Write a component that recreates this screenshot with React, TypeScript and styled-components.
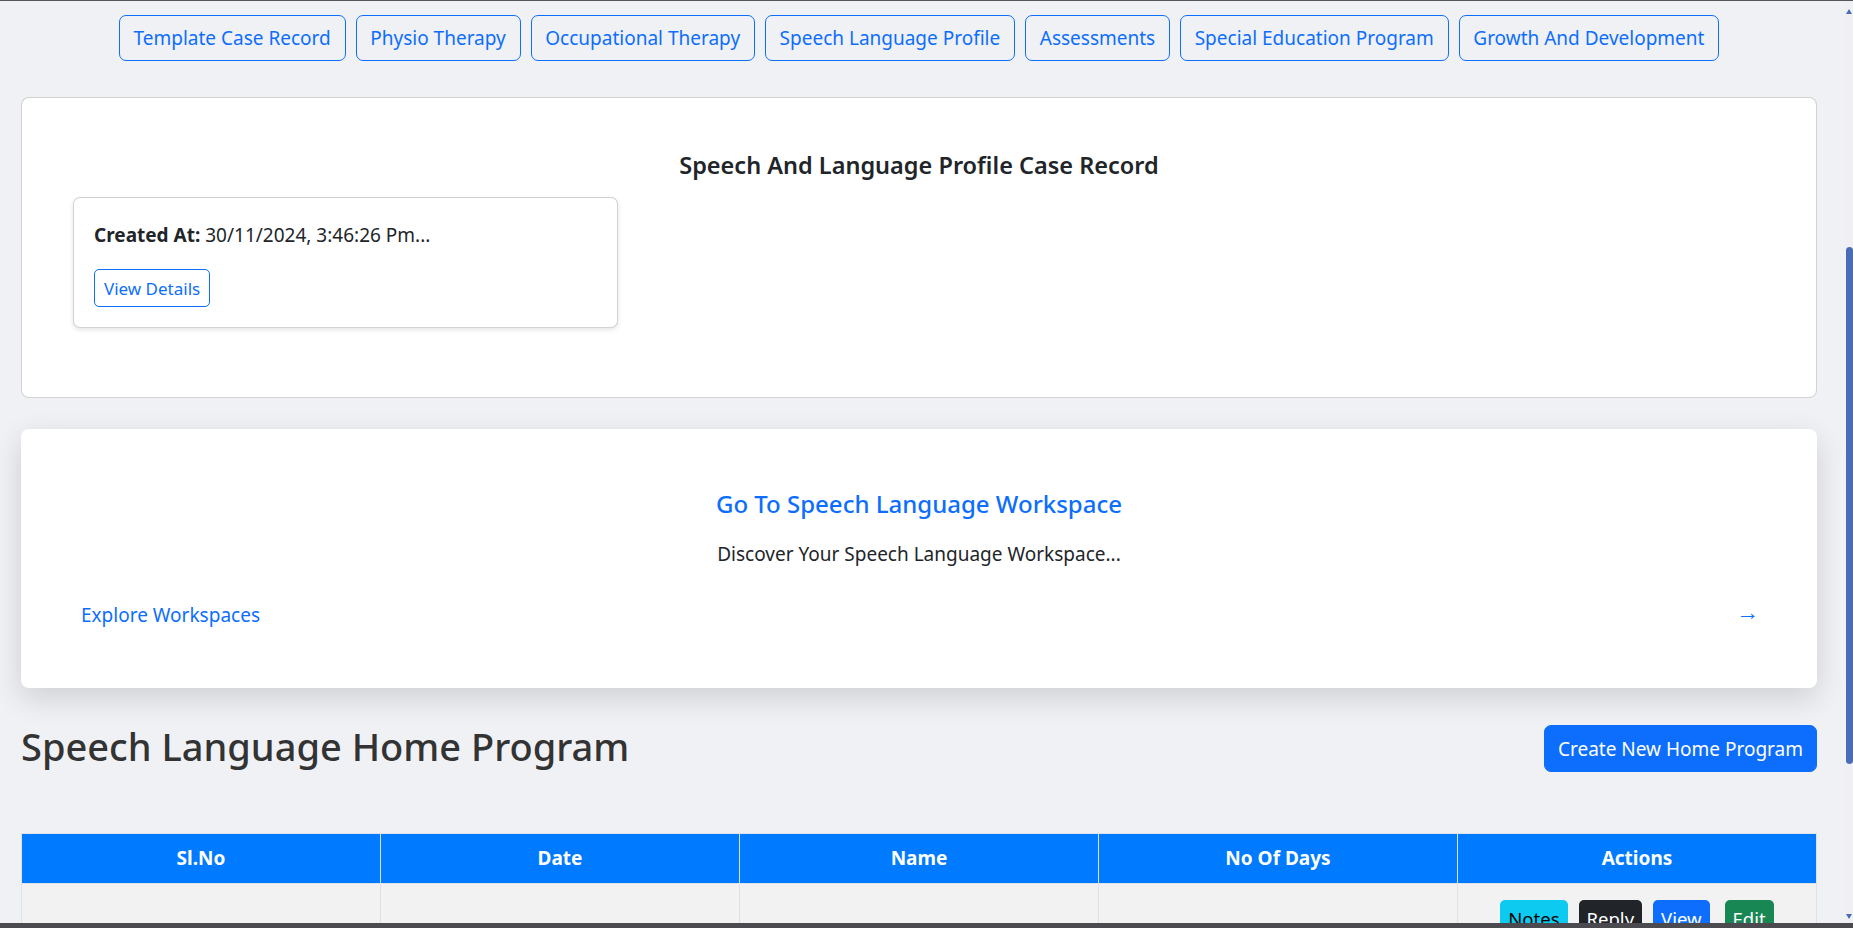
import styled, { createGlobalStyle } from "styled-components";

const GlobalStyle = createGlobalStyle`
  * {
    box-sizing: border-box;
  }
  html,
  body {
    margin: 0;
    height: 100%;
    overflow: hidden;
  }
  body {
    font-family: "Noto Sans", "Open Sans", sans-serif;
    font-size: 19px;
    color: #212529;
    background: #4a4a4f;
  }
`;

const tabs = [
  "Template Case Record",
  "Physio Therapy",
  "Occupational Therapy",
  "Speech Language Profile",
  "Assessments",
  "Special Education Program",
  "Growth And Development",
];

const columns = ["Sl.No", "Date", "Name", "No Of Days", "Actions"];

const actions = [
  { label: "Notes", variant: "info" },
  { label: "Reply", variant: "dark" },
  { label: "View", variant: "primary" },
  { label: "Edit", variant: "success" },
] as const;

type Variant = (typeof actions)[number]["variant"];

const variantColors: Record<Variant, { bg: string; fg: string }> = {
  info: { bg: "#0dcaf0", fg: "#000" },
  dark: { bg: "#212529", fg: "#fff" },
  primary: { bg: "#0d6efd", fg: "#fff" },
  success: { bg: "#198754", fg: "#fff" },
};

export default function App() {
  return (
    <>
      <GlobalStyle />
      <Frame>
        <Viewport>
          <Main>
            <TabBar>
              {tabs.map((t) => (
                <TabButton key={t}>{t}</TabButton>
              ))}
            </TabBar>

            <RecordCard>
              <CardTitle>Speech And Language Profile Case Record</CardTitle>
              <RecordItem>
                <RecordText>
                  <strong>Created At:</strong> 30/11/2024, 3:46:26 Pm...
                </RecordText>
                <OutlineSmall>View Details</OutlineSmall>
              </RecordItem>
            </RecordCard>

            <WorkspaceCard>
              <WorkspaceTitle>Go To Speech Language Workspace</WorkspaceTitle>
              <WorkspaceText>Discover Your Speech Language Workspace...</WorkspaceText>
              <WorkspaceFooter>
                <ExploreLink>Explore Workspaces</ExploreLink>
                <Arrow>→</Arrow>
              </WorkspaceFooter>
            </WorkspaceCard>

            <SectionHeader>
              <SectionTitle>Speech Language Home Program</SectionTitle>
              <PrimaryButton>Create New Home Program</PrimaryButton>
            </SectionHeader>

            <Table>
              <thead>
                <tr>
                  {columns.map((c) => (
                    <Th key={c}>{c}</Th>
                  ))}
                </tr>
              </thead>
              <tbody>
                <tr>
                  <Td />
                  <Td />
                  <Td />
                  <Td />
                  <Td>
                    <ActionGroup>
                      {actions.map((a) => (
                        <ActionButton key={a.label} $variant={a.variant}>
                          {a.label}
                        </ActionButton>
                      ))}
                    </ActionGroup>
                  </Td>
                </tr>
              </tbody>
            </Table>
          </Main>
          <ScrollTrack>
            <ScrollArrow $dir="up" />
            <ScrollThumb />
            <ScrollArrow $dir="down" />
          </ScrollTrack>
        </Viewport>
        <BottomBar />
      </Frame>
    </>
  );
}

const Frame = styled.div`
  display: flex;
  flex-direction: column;
  height: 928px;
  border-top: 1px solid #55565b;
`;

const Viewport = styled.div`
  display: flex;
  flex: 1;
  min-height: 0;
  background: #f0f1f5;
`;

const Main = styled.main`
  flex: 1;
  min-width: 0;
  overflow: hidden;
  padding: 0 28px 0 21px;
`;

const TabBar = styled.nav`
  display: flex;
  justify-content: center;
  gap: 10px;
  padding-top: 14px;
`;

const TabButton = styled.button`
  height: 46px;
  padding: 0 13.75px;
  font-family: inherit;
  font-size: 19px;
  color: #0d6efd;
  background: transparent;
  border: 1px solid #0d6efd;
  border-radius: 7px;
  cursor: pointer;
`;

const RecordCard = styled.section`
  margin-top: 36px;
  height: 301px;
  padding: 53px 51px 0;
  background: #fff;
  border: 1px solid rgba(0, 0, 0, 0.175);
  border-radius: 8px;
`;

const CardTitle = styled.h5`
  margin: 0 0 18px;
  text-align: center;
  font-size: 23.5px;
  font-weight: 600;
  line-height: 1.2;
  color: #212529;
`;

const RecordItem = styled.div`
  width: 545px;
  padding: 23px 20px 20px;
  background: #fff;
  border: 1px solid rgba(0, 0, 0, 0.175);
  border-radius: 7px;
  box-shadow: 0 2px 5px rgba(0, 0, 0, 0.1);
`;

const RecordText = styled.p`
  margin: 0 0 19px;
  font-size: 19px;
  line-height: 29px;
  color: #212529;
`;

const OutlineSmall = styled.button`
  height: 38px;
  padding: 0 9px;
  font-family: inherit;
  font-size: 17px;
  color: #0d6efd;
  background: #fff;
  border: 1px solid #0d6efd;
  border-radius: 5px;
`;

const WorkspaceCard = styled.section`
  margin-top: 31px;
  height: 259px;
  padding: 60px 60px 0;
  background: #fff;
  border-radius: 8px;
  box-shadow: 0 10px 30px rgba(0, 0, 0, 0.14);
`;

const WorkspaceTitle = styled.h4`
  margin: 0 0 22px;
  text-align: center;
  font-size: 24px;
  font-weight: 500;
  line-height: 29px;
  color: #0d6efd;
`;

const WorkspaceText = styled.p`
  margin: 0;
  text-align: center;
  font-size: 19px;
  line-height: 29px;
  color: #212529;
`;

const WorkspaceFooter = styled.div`
  display: flex;
  justify-content: space-between;
  align-items: center;
  height: 29px;
  margin-top: 32px;
  font-size: 19px;
  line-height: 29px;
`;

const ExploreLink = styled.a`
  color: #0d6efd;
  text-decoration: none;
`;

const Arrow = styled.span`
  margin: 0 -2px 9px 0;
  font-size: 23px;
  line-height: 22px;
  color: #0d6efd;
`;

const SectionHeader = styled.div`
  display: flex;
  justify-content: space-between;
  align-items: center;
  margin-top: 36px;
`;

const SectionTitle = styled.h2`
  margin: 0 0 4px;
  font-size: 38px;
  font-weight: 500;
  line-height: 1.2;
  color: #333;
`;

const PrimaryButton = styled.button`
  height: 47px;
  padding: 0 13px;
  font-family: inherit;
  font-size: 19px;
  color: #fff;
  background: #0d6efd;
  border: 1px solid #0d6efd;
  border-radius: 7px;
`;

const Table = styled.table`
  width: 100%;
  margin-top: 59px;
  border-collapse: collapse;
  table-layout: fixed;
  border: 1px solid #dee2e6;
`;

const Th = styled.th`
  height: 50px;
  padding: 10px;
  font-size: 19px;
  font-weight: 700;
  color: #fff;
  background: #007bff;
  border: 1px solid #dee2e6;
  text-align: center;
`;

const Td = styled.td`
  height: 80px;
  padding: 16px 10px;
  background: #f2f2f2;
  border: 1px solid #dee2e6;
  vertical-align: top;
`;

const ActionGroup = styled.div`
  display: flex;
  justify-content: center;
  gap: 11px;
`;

const ActionButton = styled.button<{ $variant: Variant }>`
  height: 38px;
  padding: 0 8px;
  font-family: inherit;
  font-size: 18.5px;
  color: ${(p) => variantColors[p.$variant].fg};
  background: ${(p) => variantColors[p.$variant].bg};
  border: none;
  border-radius: 5px;
  &:last-child {
    margin-left: 4px;
  }
`;

const ScrollTrack = styled.div`
  position: relative;
  width: 8px;
  background: #f0f0f4;
`;

const ScrollThumb = styled.div`
  position: absolute;
  top: 246px;
  left: 1px;
  width: 7px;
  height: 517px;
  background: #4a6cb8;
  border-radius: 4px;
`;

const ScrollArrow = styled.div<{ $dir: "up" | "down" }>`
  position: absolute;
  left: 1px;
  width: 0;
  height: 0;
  border-left: 3.5px solid transparent;
  border-right: 3.5px solid transparent;
  ${(p) =>
    p.$dir === "up"
      ? `top: 8px; border-bottom: 5px solid #4a6cb8;`
      : `bottom: 4px; border-top: 5px solid #4a6cb8;`}
`;

const BottomBar = styled.div`
  height: 5px;
  background: #4a4a4f;
`;
